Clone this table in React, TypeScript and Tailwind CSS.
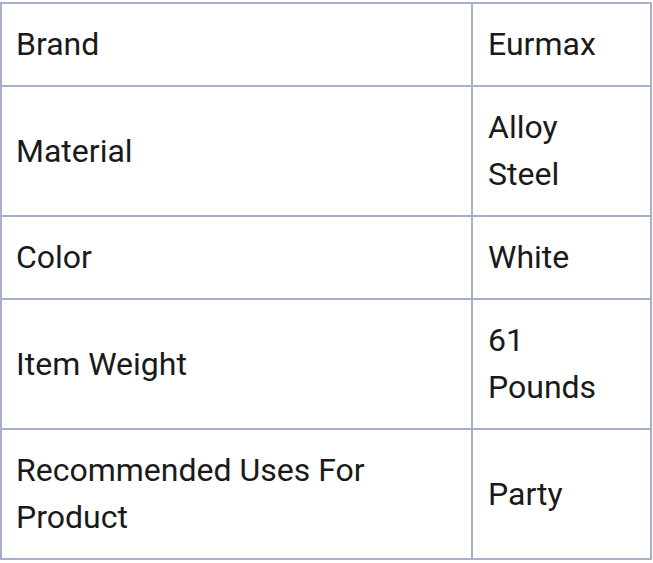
const rows = [
  { label: "Brand", value: "Eurmax" },
  { label: "Material", value: "Alloy Steel" },
  { label: "Color", value: "White" },
  { label: "Item Weight", value: "61 Pounds" },
  { label: "Recommended Uses For Product", value: "Party" },
]

export default function App() {
  return (
    <div className="bg-white min-h-screen pt-[2px]" style={{ fontFamily: "Roboto, 'Noto Sans', sans-serif" }}>
      <table className="w-[652px] border-collapse table-fixed text-[32px] leading-[47px] text-[#1a1a1a]">
        <colgroup>
          <col className="w-[471px]" />
          <col />
        </colgroup>
        <tbody>
          {rows.map((row) => (
            <tr key={row.label}>
              <td className="border-2 border-[#a6b0cb] pl-[14px] pr-[15px] py-[17px] align-middle">{row.label}</td>
              <td className="border-2 border-[#a6b0cb] pl-[15px] pr-[22px] py-[17px] align-middle">{row.value}</td>
            </tr>
          ))}
        </tbody>
      </table>
    </div>
  )
}
